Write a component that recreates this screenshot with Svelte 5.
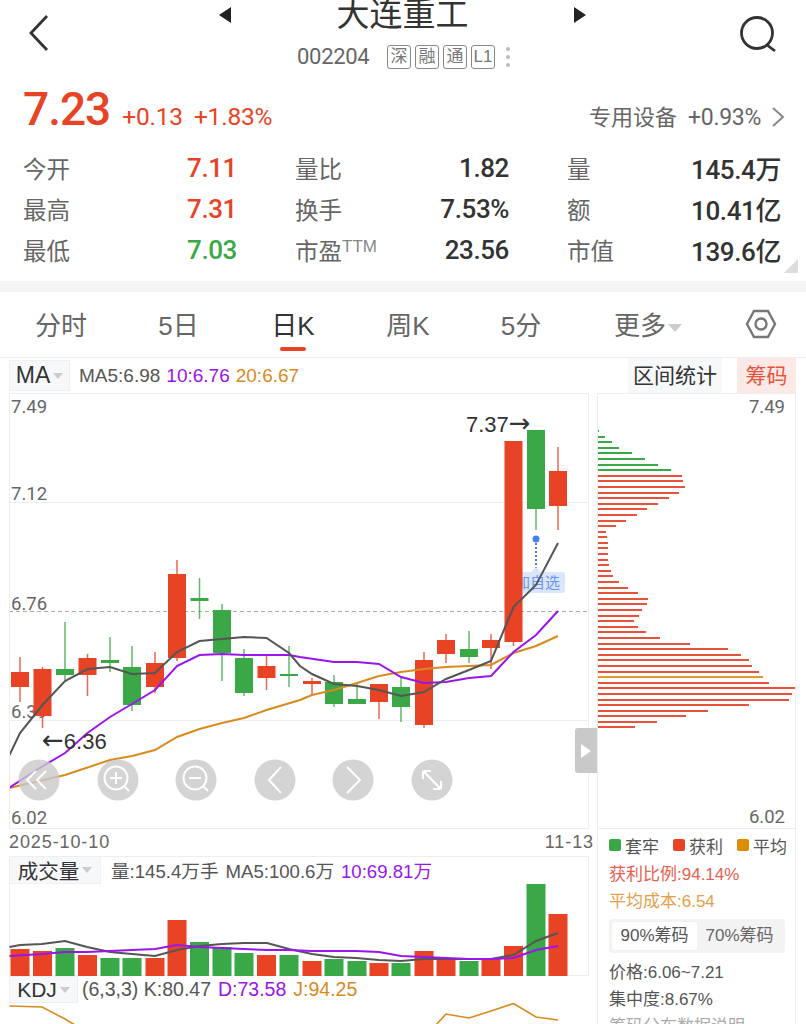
<script>
  const up = '#e84325';
  const down = '#3aa846';

  // x, color, wick top, wick bottom, body top, body bottom (page pixels)
  const candles = [
    [20, up, 657, 702, 672, 687],
    [42.5, up, 667, 728, 669, 716],
    [65, down, 622, 680, 669, 675],
    [87.5, up, 654, 696, 658, 675],
    [110, down, 637, 672, 660, 663],
    [132, down, 646, 711, 667, 705],
    [155, up, 652, 693, 663, 687],
    [177, up, 560, 661, 574, 658],
    [199.5, down, 578, 619, 598, 601],
    [222, down, 604, 681, 610, 653],
    [244, down, 649, 696, 658, 693],
    [266.5, up, 655, 690, 666, 678],
    [289, down, 646, 687, 674, 676],
    [312, up, 678, 696, 681, 684],
    [334, down, 675, 707, 682, 704],
    [357, down, 682, 704, 699, 704],
    [379, up, 684, 719, 684, 702],
    [401, down, 677, 722, 687, 707],
    [424, up, 652, 728, 660, 725],
    [446, up, 634, 663, 640, 654],
    [469, down, 631, 663, 649, 657],
    [491, up, 634, 669, 640, 648],
    [513.5, up, 441, 646, 441, 642],
    [536, down, 430, 530, 430, 509],
    [558, up, 447, 530, 471, 506]
  ];

  const ma5 = '9,756 20,733 42.5,705 65,681 87.5,669 110,667 132,674 155,673 177,652 199.5,641 222,639 244,637 266.5,638 289,653 300,666 312,674 334,684 357,686 379,690 401,696 424,692 446,679 469,670 491,661 513.5,607 536,585 558,543';
  const ma10 = '9,788 38,769 65,753 87.5,733 110,717 132,704 155,690 177,666 199.5,655 222,654 244,655 266.5,655 289,655 300,657 334,662 357,662 379,664 401,677 424,683 446,682 469,678 491,676 513.5,652 536,635 558,611';
  const ma20 = '9,788 65,775 110,760 132,756 155,750 177,737 199.5,729 222,723 244,718 266.5,710 300,700 312,695 334,690 357,683 379,676 401,672 424,669 446,667 469,666 491,665 513.5,653 536,646 558,636';

  const volTops = [949, 951, 948, 955, 958, 958, 958, 920, 942, 947, 953, 955, 955, 961, 959, 961, 963, 963, 951, 958, 961, 959, 946, 884, 914];
  const volMa5 = '9.5,947 20,945 42,944 65,941 87,947 110,952 132,954 155,956 177,950 200,946 222,944 244,943 267,943 289,949 312,954 334,957 356,958 379,960 401,961 424,959 446,959 469,959 491,959 513.5,955 536,941 558,933';
  const volMa10 = '9.5,956 42,954 65,952 87,952 110,951 132,950 155,949 177,945 200,947 222,948 244,949 267,950 289,950 312,951 334,951 356,951 379,952 401,956 424,957 446,958 469,959 491,959 513.5,958 536,950 558,946';

  // chip distribution widths, top to bottom
  const chips = [2, 8, 15, 22, 35, 48, 61, 74, 85, 86, 88, 82, 72, 61, 50, 40, 29, 19, 9, 10, 11, 11, 11, 11, 12, 14, 16, 22, 31, 41, 51, 50, 45, 42, 37, 41, 49, 63, 93, 131, 144, 152, 155, 162, 166, 172, 199, 195, 192, 152, 111, 89, 60, 38];
  const chipColor = (i) => (i < 8 ? down : i === 44 ? '#e09a2b' : '#e8523a');

  const tabs = [
    { label: '分时' },
    { label: '5日' },
    { label: '日K', active: true },
    { label: '周K' },
    { label: '5分' },
    { label: '更多', more: true }
  ];

  const stats = [
    [['今开', '7.11', 'up'], ['量比', '1.82'], ['量', '145.4万']],
    [['最高', '7.31', 'up'], ['换手', '7.53%'], ['额', '10.41亿']],
    [['最低', '7.03', 'down'], ['市盈', '23.56'], ['市值', '139.6亿']]
  ];

  const zoomButtons = [39, 118, 196, 275, 353, 432];
</script>

<div class="page">
  <header class="top">
    <svg class="back" width="24" height="40" viewBox="0 0 24 40"><path d="M20 3 L4 20 L20 37" /></svg>
    <div class="switch">
      <svg width="14" height="18" viewBox="0 0 14 18"><path d="M13 1 V17 L1 9 Z" /></svg>
      <div class="title">大连重工</div>
      <svg width="14" height="18" viewBox="0 0 14 18"><path d="M1 1 V17 L13 9 Z" /></svg>
    </div>
    <svg class="search" width="40" height="40" viewBox="0 0 40 40"><circle cx="18" cy="18" r="15.5" /><path d="M28 30 L36 36" /></svg>
    <div class="code-row">
      <span class="code">002204</span>
      <span class="tag">深</span><span class="tag">融</span><span class="tag">通</span><span class="tag">L1</span>
      <span class="dots"><i></i><i></i><i></i></span>
    </div>
  </header>

  <section class="quote">
    <span class="price">7.23</span>
    <span class="change">+0.13</span>
    <span class="change">+1.83%</span>
    <span class="sector">专用设备</span>
    <span class="sector-pct">+0.93%</span>
    <svg width="14" height="22" viewBox="0 0 14 22"><path d="M2 2 L12 11 L2 20" /></svg>
  </section>

  <section class="stats">
    {#each stats as row}
      <div class="stat-row">
        {#each row as cell}
          <div class="stat">
            <span class="lbl">{cell[0]}{#if cell[0] === '市盈'}<sup>TTM</sup>{/if}</span>
            <span class="val {cell[2] ?? ''}">{cell[1]}</span>
          </div>
        {/each}
      </div>
    {/each}
    <span class="corner"></span>
  </section>

  <div class="band"></div>

  <nav class="tabs">
    {#each tabs as tab}
      <div class="tab" class:active={tab.active}>
        {tab.label}{#if tab.more}<span class="tri"></span>{/if}
      </div>
    {/each}
    <svg class="hex" width="32" height="32" viewBox="0 0 32 32"><path d="M9 3 H23 L30 16 L23 29 H9 L2 16 Z" /><circle cx="16" cy="16" r="5.5" /></svg>
  </nav>

  <div class="ma-row">
    <div class="select">MA<span class="tri small"></span></div>
    <span class="ma-text gray">MA5:6.98</span>
    <span class="ma-text purple">10:6.76</span>
    <span class="ma-text orange">20:6.67</span>
    <div class="range">区间统计</div>
    <div class="chip-btn">筹码</div>
  </div>

  <div class="charts">
    <div class="kline">
      <svg width="580" height="436" viewBox="9 393 580 436">
        <line class="grid" x1="9" x2="589" y1="502.5" y2="502.5" />
        <line class="dash" x1="9" x2="589" y1="611.5" y2="611.5" />
        <line class="grid" x1="9" x2="589" y1="720.5" y2="720.5" />

        <text class="axis" x="11" y="413">7.49</text>
        <text class="axis" x="11" y="500">7.12</text>
        <text class="axis" x="11" y="610">6.76</text>
        <text class="axis" x="11" y="718">6.39</text>
        <text class="axis" x="11" y="824">6.02</text>

        <circle cx="536" cy="539" r="3.5" fill="#4a7df0" />
        <line x1="536" x2="536" y1="543" y2="568" stroke="#4a7df0" stroke-width="2" stroke-dasharray="2 2" />
        <path d="M531 572 L536 567 L541 572 Z" fill="#dbe6fb" />
        <rect x="505" y="572" width="60" height="21" rx="3" fill="#dbe6fb" />
        <text class="bubble" x="515" y="588">加自选</text>

        {#each candles as c}
          <line x1={c[0]} x2={c[0]} y1={c[2]} y2={c[3]} stroke={c[1]} stroke-width="1.5" opacity="0.8" />
          <rect x={c[0] - 9} y={c[4]} width="18" height={c[5] - c[4]} fill={c[1]} />
        {/each}

        <polyline class="line" points={ma20} stroke="#d98a1f" />
        <polyline class="line" points={ma10} stroke="#9a14ee" />
        <polyline class="line" points={ma5} stroke="#555" />

        <text class="mark" x="466" y="432">7.37<tspan class="arrow">→</tspan></text>
        <text class="mark" x="42" y="749"><tspan class="arrow">←</tspan>6.36</text>

        {#each zoomButtons as x}
          <circle cx={x} cy="780" r="20.5" fill="#c9c9c9" opacity="0.8" />
        {/each}
        <g class="glyph">
          <path d="M36 771 L27 780 L36 789 M46 771 L37 780 L46 789" />
          <circle cx="116" cy="778" r="11.5" /><path d="M124 786 L129 791 M110 778 H122 M116 772 V784" />
          <circle cx="195" cy="778" r="11.5" /><path d="M203 786 L208 791 M189 778 H201" />
          <path d="M281 767 L269 780 L281 793" />
          <path d="M347 767 L360 780 L347 793" />
          <path d="M423 771 L441 789 M423 771 H431 M423 771 V779 M441 789 H433 M441 789 V781" />
        </g>
      </svg>
      <div class="collapse"><span></span></div>
    </div>

    <div class="chip-chart">
      <span class="chip-axis">7.49</span>
      <div class="chip-bars">
        {#each chips as w, i}
          <div class="chip-bar" style="width:{w}px;background:{chipColor(i)}"></div>
        {/each}
      </div>
      <span class="chip-axis bottom">6.02</span>
    </div>
  </div>

  <div class="lower">
    <div class="lower-left">
      <div class="dates"><span>2025-10-10</span><span>11-13</span></div>
      <div class="volume">
        <div class="indicator-row">
          <div class="select vol">成交量<span class="tri small"></span></div>
          <span class="ind-text gray">量:145.4万手</span>
          <span class="ind-text gray">MA5:100.6万</span>
          <span class="ind-text purple">10:69.81万</span>
        </div>
        <svg class="vol-chart" width="580" height="92" viewBox="9 884 580 92">
          {#each volTops as top, i}
            <rect x={candles[i][0] - 9.5} y={top} width="19" height={976 - top} fill={candles[i][1]} />
          {/each}
          <polyline class="line" points={volMa5} stroke="#555" />
          <polyline class="line" points={volMa10} stroke="#9a14ee" />
        </svg>
      </div>
      <div class="kdj">
        <div class="indicator-row kdj-row">
          <div class="select kd">KDJ<span class="tri small"></span></div>
          <span class="ind-text gray">(6,3,3) K:80.47</span>
          <span class="ind-text purple">D:73.58</span>
          <span class="ind-text orange">J:94.25</span>
        </div>
        <svg class="kdj-chart" width="580" height="21" viewBox="9 1003 580 21">
          <polyline class="line thin" points="9.5,1006 42,1007 65,1019 75,1025" stroke="#d98a1f" />
          <polyline class="line thin" points="436,1025 446,1014 469,1018 491,1011 513.5,1003.5 536,1017 558,1020" stroke="#d98a1f" />
        </svg>
      </div>
    </div>

    <aside class="chip-info">
      <div class="legend">
        <span><i style="background:{down}"></i>套牢</span>
        <span><i style="background:{up}"></i>获利</span>
        <span><i style="background:#dc8c05"></i>平均</span>
      </div>
      <div class="info red">获利比例:94.14%</div>
      <div class="info amber">平均成本:6.54</div>
      <div class="switcher">
        <span class="on">90%筹码</span>
        <span>70%筹码</span>
      </div>
      <div class="info">价格:6.06~7.21</div>
      <div class="info">集中度:8.67%</div>
      <div class="info faint">筹码分布数据说明</div>
    </aside>
  </div>
</div>

<style>
  :global(body) {
    margin: 0;
    background: #fff;
    overflow: hidden;
  }

  .page {
    width: 806px;
    height: 1024px;
    overflow: hidden;
    font-family: 'Liberation Sans', 'Noto Sans CJK SC', sans-serif;
    color: #333;
  }

  /* header */
  .top {
    position: relative;
    height: 78px;
  }

  .back,
  .search {
    position: absolute;
    fill: none;
    stroke: #333;
    stroke-width: 2.8;
  }

  .back {
    left: 27px;
    top: 13px;
  }

  .search {
    left: 739px;
    top: 15px;
  }

  .switch {
    position: absolute;
    left: 218px;
    top: -6px;
    width: 369px;
    display: flex;
    justify-content: space-between;
    align-items: center;
  }

  .switch svg {
    fill: #222;
  }

  .title {
    font-size: 33px;
    line-height: 42px;
    color: #333;
  }

  .code-row {
    position: absolute;
    top: 45px;
    left: 297px;
    display: flex;
    align-items: center;
    gap: 4px;
  }

  .code {
    font-family: Roboto, sans-serif;
    font-size: 22px;
    line-height: 24px;
    letter-spacing: -0.3px;
    color: #666;
    width: 86px;
  }

  .tag {
    width: 24px;
    height: 24px;
    box-sizing: border-box;
    border: 1px solid #888;
    border-radius: 3px;
    font-size: 17px;
    line-height: 22px;
    text-align: center;
    color: #777;
  }

  .dots {
    display: flex;
    flex-direction: column;
    gap: 4px;
    margin-left: 7px;
  }

  .dots i {
    width: 4px;
    height: 4px;
    border-radius: 50%;
    background: #bbb;
  }

  /* price line */
  .quote {
    height: 62px;
    padding: 0 21px 0 23px;
    display: flex;
    align-items: baseline;
    color: #e84325;
    font-family: Roboto, 'Noto Sans CJK SC', sans-serif;
  }

  .price {
    font-size: 46px;
    font-weight: 500;
    line-height: 62px;
    letter-spacing: -1px;
    margin-right: 12px;
  }

  .change {
    font-size: 24.5px;
    letter-spacing: -0.2px;
    margin-right: 11px;
  }

  .sector {
    margin-left: auto;
    font-size: 22px;
    color: #666;
  }

  .sector-pct {
    font-size: 23px;
    color: #666;
    margin-left: 11px;
    letter-spacing: -0.3px;
  }

  .quote svg {
    fill: none;
    stroke: #888;
    stroke-width: 2;
    margin-left: 10px;
    align-self: center;
    margin-top: 16px;
  }

  /* stats */
  .stats {
    position: relative;
    height: 141px;
    padding: 7px 0 0 23px;
    box-sizing: border-box;
  }

  .stat-row {
    display: grid;
    grid-template-columns: 272px 272px 214px;
    height: 41px;
    align-items: center;
  }

  .stat {
    display: flex;
    justify-content: space-between;
    align-items: center;
    margin-right: 58px;
  }

  .stat:last-child {
    margin-right: 0;
  }

  .lbl {
    font-size: 23.5px;
    color: #666;
    white-space: nowrap;
  }

  .lbl sup {
    font-size: 17px;
    line-height: 0;
    vertical-align: 8px;
    color: #888;
  }

  .val {
    font-family: Roboto, 'Noto Sans CJK SC', sans-serif;
    font-size: 26px;
    font-weight: 500;
    letter-spacing: -0.4px;
    color: #333;
  }

  .val.up {
    color: #e84325;
  }

  .val.down {
    color: #3aa846;
  }

  .corner {
    position: absolute;
    right: 8px;
    bottom: 8px;
    width: 0;
    height: 0;
    border-left: 14px solid transparent;
    border-bottom: 14px solid #ddd;
  }

  .band {
    height: 11px;
    background: #f5f5f5;
  }

  /* period tabs */
  .tabs {
    position: relative;
    height: 65px;
    border-bottom: 1px solid #eee;
    display: grid;
    grid-template-columns: 122px 113px 116px 114px 112px 142px;
    align-items: center;
  }

  .tab {
    position: relative;
    font-size: 26px;
    color: #666;
    text-align: center;
    white-space: nowrap;
    top: -1px;
  }

  .tab.active {
    color: #333;
  }

  .tab.active::after {
    content: '';
    position: absolute;
    left: 50%;
    margin-left: -13px;
    bottom: -9px;
    width: 26px;
    height: 4px;
    border-radius: 2px;
    background: #e84325;
  }

  .tri {
    display: inline-block;
    width: 0;
    height: 0;
    margin-left: 2px;
    vertical-align: 3px;
    border: 7px solid transparent;
    border-top: 8px solid #ccc;
    border-bottom: 0;
  }

  .tri.small {
    border-width: 6px 5px 0;
    margin-left: 3px;
    vertical-align: 4px;
  }

  .hex {
    position: absolute;
    left: 745px;
    top: 16px;
    fill: none;
    stroke: #777;
    stroke-width: 2.4;
  }

  /* MA row */
  .ma-row {
    height: 35px;
    display: flex;
    align-items: center;
    padding-left: 9px;
  }

  .select {
    background: #f7f8fa;
    border: 1px solid #eef0f3;
    box-sizing: border-box;
    font-size: 23px;
    color: #333;
    display: flex;
    align-items: center;
    justify-content: center;
    height: 31px;
    width: 61px;
    margin-right: 9px;
  }

  .ma-text {
    font-size: 19px;
    margin-right: 6px;
  }

  .gray {
    color: #555;
  }

  .purple {
    color: #9a14ee;
  }

  .orange {
    color: #d98a1f;
  }

  .range {
    margin-left: auto;
    width: 94px;
    height: 35px;
    line-height: 35px;
    background: #f7f8fa;
    text-align: center;
    font-size: 21px;
    color: #333;
  }

  .chip-btn {
    width: 59px;
    height: 35px;
    line-height: 35px;
    margin: 0 10px 0 15px;
    background: #fdeae6;
    color: #e8523a;
    text-align: center;
    font-size: 21px;
  }

  /* charts */
  .charts {
    display: flex;
    padding-left: 9px;
    height: 436px;
  }

  .kline {
    position: relative;
    width: 580px;
    height: 436px;
    box-sizing: border-box;
    outline: 1px solid #eee;
    outline-offset: -1px;
  }

  .kline svg {
    display: block;
  }

  .grid {
    stroke: #eee;
    stroke-width: 1;
  }

  .dash {
    stroke: #aaa;
    stroke-width: 1;
    stroke-dasharray: 4 3;
  }

  .axis {
    font-family: Roboto, sans-serif;
    font-size: 18.5px;
    fill: #666;
  }

  .bubble {
    font-size: 15px;
    fill: #6a94ee;
  }

  .mark {
    font-size: 22px;
    fill: #333;
  }

  .arrow {
    font-family: 'DejaVu Sans', sans-serif;
    font-size: 26px;
  }

  .line {
    fill: none;
    stroke-width: 2;
  }

  .glyph {
    fill: none;
    stroke: #fff;
    stroke-width: 2;
  }

  .collapse {
    position: absolute;
    left: 566px;
    top: 335px;
    width: 22px;
    height: 45px;
    border-radius: 3px 0 0 3px;
    background: #c9c9c9;
    display: flex;
    align-items: center;
    justify-content: center;
  }

  .collapse span {
    width: 0;
    height: 0;
    border-left: 10px solid #fff;
    border-top: 7px solid transparent;
    border-bottom: 7px solid transparent;
  }

  .chip-chart {
    position: relative;
    margin-left: 8px;
    width: 199px;
    height: 436px;
    box-sizing: border-box;
    outline: 1px solid #eee;
    outline-offset: -1px;
  }

  .chip-axis {
    position: absolute;
    right: 11px;
    top: 3px;
    font-family: Roboto, sans-serif;
    font-size: 18.5px;
    color: #666;
  }

  .chip-axis.bottom {
    top: auto;
    bottom: 1px;
  }

  .chip-bars {
    padding-top: 37px;
    display: flex;
    flex-direction: column;
    gap: 3.6px;
    align-items: flex-start;
  }

  .chip-bar {
    height: 2px;
  }

  /* lower part */
  .lower {
    display: flex;
    padding-left: 9px;
  }

  .lower-left {
    width: 580px;
  }

  .dates {
    height: 27px;
    display: flex;
    justify-content: space-between;
    align-items: center;
    font-size: 18px;
    color: #666;
    letter-spacing: 0.9px;
    margin-right: -5px;
  }

  .volume {
    height: 120px;
    box-sizing: border-box;
    position: relative;
    outline: 1px solid #eee;
    outline-offset: -1px;
  }

  .indicator-row {
    height: 27px;
    display: flex;
    align-items: center;
  }

  .select.vol {
    width: 92px;
    height: 28px;
    margin-right: 10px;
    font-size: 20.5px;
  }

  .select.kd {
    width: 69px;
    height: 27px;
    margin-right: 4px;
    font-size: 21px;
  }

  .ind-text {
    font-size: 18.6px;
    margin-right: 7px;
    white-space: nowrap;
  }

  .kdj-row .ind-text {
    font-size: 19.5px;
  }

  .vol-chart {
    display: block;
    position: absolute;
    left: 0;
    bottom: 0;
  }

  .kdj-chart {
    display: block;
  }

  .line.thin {
    stroke-width: 1.6;
  }

  .chip-info {
    margin-left: 8px;
    width: 199px;
    padding: 0 8px 0 11px;
    box-sizing: border-box;
    border-left: 1px solid #eee;
    border-right: 1px solid #eee;
    height: 195px;
    font-size: 17px;
    color: #555;
  }

  .legend {
    height: 32px;
    display: flex;
    align-items: center;
    gap: 14px;
  }

  .legend span {
    display: flex;
    align-items: center;
    gap: 4px;
    white-space: nowrap;
  }

  .legend i {
    width: 12px;
    height: 12px;
    border-radius: 2px;
  }

  .info {
    height: 27px;
    line-height: 27px;
    white-space: nowrap;
  }

  .red {
    color: #e8604f;
  }

  .amber {
    color: #e2a04a;
  }

  .faint {
    color: #aaa;
  }

  .switcher {
    margin: 4px 0 6px;
    height: 34px;
    width: 176px;
    background: #f3f3f3;
    border-radius: 4px;
    padding: 3px;
    box-sizing: border-box;
    display: flex;
    color: #666;
  }

  .switcher span {
    flex: 1;
    text-align: center;
    line-height: 28px;
    border-radius: 3px;
    white-space: nowrap;
  }

  .switcher .on {
    background: #fff;
    color: #555;
  }
</style>
